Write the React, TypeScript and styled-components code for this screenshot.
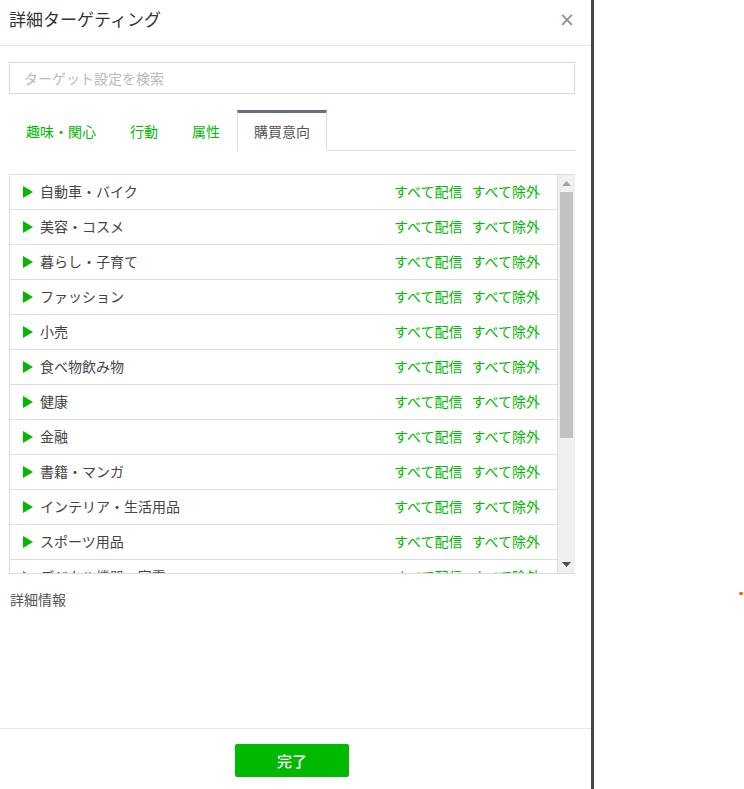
import styled, { createGlobalStyle } from "styled-components";

const categories = [
    "自動車・バイク",
    "美容・コスメ",
    "暮らし・子育て",
    "ファッション",
    "小売",
    "食べ物飲み物",
    "健康",
    "金融",
    "書籍・マンガ",
    "インテリア・生活用品",
    "スポーツ用品",
    "デジタル機器・家電",
];

const tabs = ["趣味・関心", "行動", "属性", "購買意向"];

function App() {
    return (
        <Page>
            <GlobalStyle />
            <Panel>
                <Header>
                    <Title>詳細ターゲティング</Title>
                    <CloseButton>×</CloseButton>
                </Header>
                <Body>
                    <SearchInput placeholder="ターゲット設定を検索" />
                    <TabBar>
                        {tabs.map((t, i) => (
                            <Tab key={t} $active={i === tabs.length - 1}>{t}</Tab>
                        ))}
                    </TabBar>
                    <ListBox>
                        <List>
                            {categories.map((c) => (
                                <Row key={c}>
                                    <Arrow>
                                        <svg width="10" height="12" viewBox="0 0 10 12">
                                            <path d="M0 0L10 6L0 12Z" fill="#00b900" />
                                        </svg>
                                    </Arrow>
                                    <RowLabel>{c}</RowLabel>
                                    <RowLink>すべて配信</RowLink>
                                    <RowLink>すべて除外</RowLink>
                                </Row>
                            ))}
                        </List>
                        <ScrollTrack>
                            <ScrollArrow>
                                <svg width="9" height="5" viewBox="0 0 9 5">
                                    <path d="M0 5L4.5 0L9 5Z" fill="#a3a3a3" />
                                </svg>
                            </ScrollArrow>
                            <ScrollThumb />
                            <ScrollSpace />
                            <ScrollArrow>
                                <svg width="9" height="5" viewBox="0 0 9 5">
                                    <path d="M0 0L9 0L4.5 5Z" fill="#505050" />
                                </svg>
                            </ScrollArrow>
                        </ScrollTrack>
                    </ListBox>
                    <DetailLabel>詳細情報</DetailLabel>
                </Body>
                <Footer>
                    <DoneButton>完了</DoneButton>
                </Footer>
            </Panel>
            <Divider />
            <RightPane>
                <Dot />
            </RightPane>
        </Page>
    );
}

const GlobalStyle = createGlobalStyle`
    body {
        margin: 0;
        background: #fff;
        font-family: "Noto Sans CJK JP", "Noto Sans", sans-serif;
    }
`;

const Page = styled.div`
    display: flex;
    width: 744px;
    height: 789px;
    overflow: hidden;
`;

const Panel = styled.div`
    width: 591px;
    height: 789px;
    display: flex;
    flex-direction: column;
    background: #fff;
`;

const Header = styled.div`
    display: flex;
    align-items: center;
    justify-content: space-between;
    height: 46px;
    padding: 0 16px 0 9px;
    border-bottom: 1px solid #e5e5e5;
    box-sizing: border-box;
`;

const Title = styled.div`
    font-size: 17px;
    color: #333;
    margin-top: -9px;
`;

const CloseButton = styled.div`
    font-size: 19px;
    color: #8a8a8a;
    margin-top: -6px;
    line-height: 1;
    font-family: "DejaVu Sans", sans-serif;
`;

const Body = styled.div`
    flex: 1;
    display: flex;
    flex-direction: column;
    padding: 16px 16px 0 9px;
`;

const SearchInput = styled.input`
    height: 32px;
    box-sizing: border-box;
    border: 1px solid #d9d9d9;
    padding: 0 14px;
    font-size: 14px;
    font-family: inherit;
    color: #333;
    outline: none;

    &::placeholder {
        color: #b8b8b8;
    }
`;

const TabBar = styled.div`
    display: flex;
    margin-top: 16px;
    height: 41px;
    border-bottom: 1px solid #dcdcdc;
    box-sizing: border-box;
`;

const Tab = styled.div<{ $active?: boolean }>`
    display: flex;
    align-items: center;
    padding: 0 16px 2px;
    font-size: 14px;
    margin-bottom: -1px;
    box-sizing: border-box;
    color: ${(p) => (p.$active ? "#555" : "#00b900")};
    background: #fff;
    border: 1px solid ${(p) => (p.$active ? "#dcdcdc" : "transparent")};
    border-top: 3px solid ${(p) => (p.$active ? "#666e86" : "transparent")};
    border-bottom: 1px solid ${(p) => (p.$active ? "#fff" : "transparent")};
`;

const ListBox = styled.div`
    display: flex;
    margin-top: 23px;
    height: 400px;
    border: 1px solid #dcdcdc;
    border-right: none;
    box-sizing: border-box;
    overflow: hidden;
`;

const List = styled.div`
    flex: 1;
    overflow: hidden;
    border-right: 1px solid #dcdcdc;
`;

const Row = styled.div`
    display: flex;
    align-items: center;
    height: 35px;
    box-sizing: border-box;
    border-bottom: 1px solid #dcdcdc;
    padding: 0 17px 2px 13px;
    font-size: 14px;
`;

const Arrow = styled.span`
    display: flex;
    width: 10px;
    margin-right: 7px;
    margin-top: 1px;
`;

const RowLabel = styled.span`
    flex: 1;
    color: #444;
`;

const RowLink = styled.span`
    color: #00b900;
    margin-left: 9px;
`;

const ScrollTrack = styled.div`
    width: 17px;
    display: flex;
    flex-direction: column;
    background: #f0f0f0;
`;

const ScrollArrow = styled.div`
    height: 17px;
    display: flex;
    align-items: center;
    justify-content: center;
`;

const ScrollThumb = styled.div`
    height: 246px;
    margin: 0 2px;
    background: #c1c1c1;
`;

const ScrollSpace = styled.div`
    flex: 1;
`;

const DetailLabel = styled.div`
    margin-top: 15px;
    font-size: 14px;
    color: #555;
    padding-left: 1px;
`;

const Footer = styled.div`
    display: flex;
    justify-content: center;
    height: 61px;
    padding: 15px 7px 0 0;
    box-sizing: border-box;
    border-top: 1px solid #e5e5e5;
`;

const DoneButton = styled.button`
    width: 114px;
    height: 33px;
    border: none;
    border-radius: 2px;
    background: #00b900;
    color: #fff;
    font-size: 15px;
    font-weight: 500;
    font-family: inherit;
`;

const Divider = styled.div`
    width: 3px;
    background: #464646;
`;

const RightPane = styled.div`
    flex: 1;
    position: relative;
    background: #fff;
`;

const Dot = styled.div`
    position: absolute;
    left: 145px;
    top: 592px;
    width: 4px;
    height: 3px;
    border-radius: 2px;
    background: #ff5a00;
`;

export default App;
